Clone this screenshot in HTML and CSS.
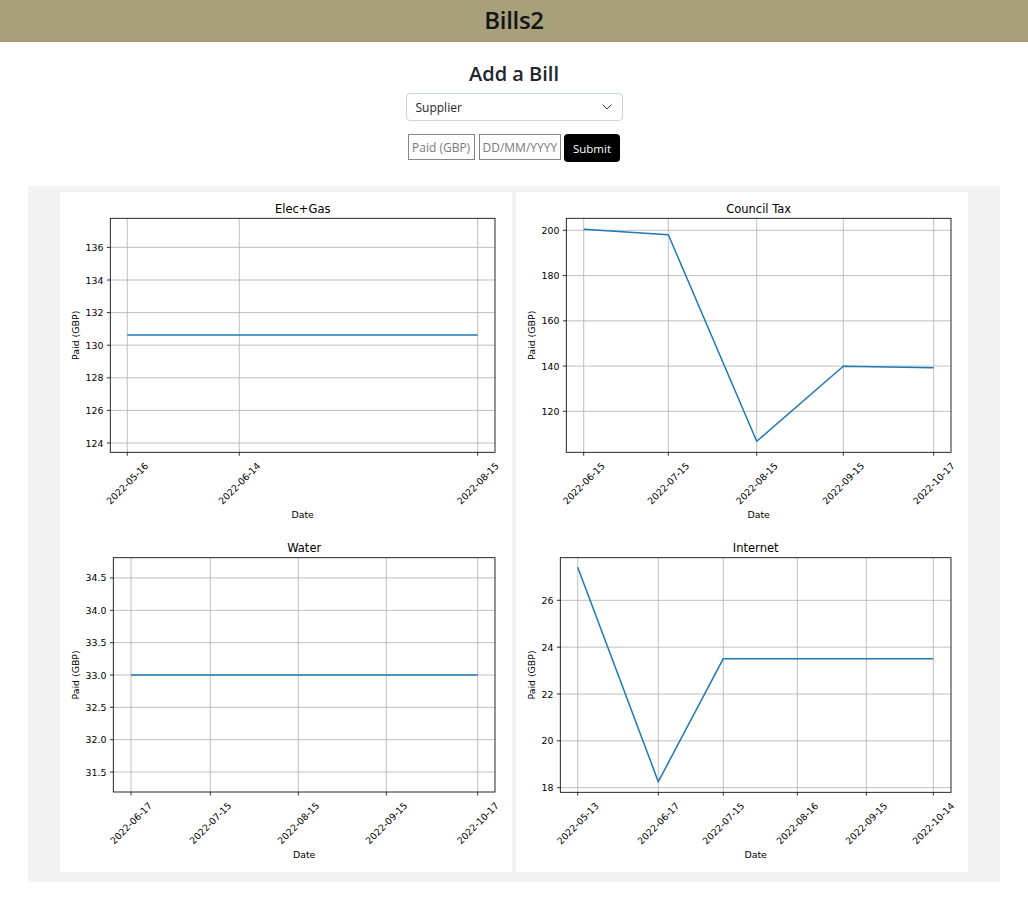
FILE: index.html
```html
<!DOCTYPE html>
<html lang="en">
<head>
<meta charset="utf-8">
<title>Bills2</title>
<link rel="stylesheet" href="styles.css">
</head>
<body>
<header class="topbar"><h1>Bills2</h1></header>
<main>
  <section class="add-bill">
    <h2>Add a Bill</h2>
    <form class="bill-form">
      <label class="select-wrap">
        <select class="supplier">
          <option>Supplier</option>
          <option>Elec+Gas</option>
          <option>Council Tax</option>
          <option>Water</option>
          <option>Internet</option>
        </select>
        <svg class="chevron" width="10" height="6" viewBox="0 0 10 6"><path d="M0.6 0.6L5 5L9.4 0.6" fill="none" stroke="#343a40" stroke-width="1"/></svg>
      </label>
      <div class="form-row">
        <input class="paid" type="text" placeholder="Paid (GBP)">
        <input class="date" type="text" placeholder="DD/MM/YYYY">
        <button class="submit" type="button">Submit</button>
      </div>
    </form>
  </section>

  <section class="charts">
    <!-- Elec+Gas -->
    <svg class="plot" width="452" height="340" viewBox="0 0 452 340">
      <text class="title" x="242.7" y="20.7">Elec+Gas</text>
      <path class="grid" d="M50.3 251H435M50.3 218.4H435M50.3 185.8H435M50.3 153.2H435M50.3 120.6H435M50.3 88H435M50.3 55.4H435M67.3 26.3V260.3M179.3 26.3V260.3M417.7 26.3V260.3"/>
      <path class="series" d="M67.3 143H417.7"/>
      <rect class="frame" x="50.3" y="26.3" width="384.7" height="234"/>
      <path class="tick" d="M46.9 251H50.3M46.9 218.4H50.3M46.9 185.8H50.3M46.9 153.2H50.3M46.9 120.6H50.3M46.9 88H50.3M46.9 55.4H50.3M67.3 260.3V263.7M179.3 260.3V263.7M417.7 260.3V263.7"/>
      <g class="ytl">
        <text x="43.4" y="251">124</text>
        <text x="43.4" y="218.4">126</text>
        <text x="43.4" y="185.8">128</text>
        <text x="43.4" y="153.2">130</text>
        <text x="43.4" y="120.6">132</text>
        <text x="43.4" y="88">134</text>
        <text x="43.4" y="55.4">136</text>
      </g>
      <g class="xtl">
        <text transform="translate(67.3 291.3) rotate(-45)">2022-05-16</text>
        <text transform="translate(179.3 291.3) rotate(-45)">2022-06-14</text>
        <text transform="translate(417.7 291.3) rotate(-45)">2022-08-15</text>
      </g>
      <text class="xlab" x="242.7" y="325.8">Date</text>
      <text class="ylab" transform="translate(15.5 143.3) rotate(-90)">Paid (GBP)</text>
    </svg>

    <!-- Council Tax -->
    <svg class="plot" width="452" height="340" viewBox="0 0 452 340">
      <text class="title" x="242.7" y="20.7">Council Tax</text>
      <path class="grid" d="M50.3 219.3H435M50.3 174.05H435M50.3 128.8H435M50.3 83.55H435M50.3 38.3H435M67.7 26.3V260.3M152.3 26.3V260.3M240.7 26.3V260.3M327.3 26.3V260.3M417.7 26.3V260.3"/>
      <path class="series" d="M67.7 37.3L152.3 42.7L240.7 249.3L327.3 174.3L417.7 175.7"/>
      <rect class="frame" x="50.3" y="26.3" width="384.7" height="234"/>
      <path class="tick" d="M46.9 219.3H50.3M46.9 174.05H50.3M46.9 128.8H50.3M46.9 83.55H50.3M46.9 38.3H50.3M67.7 260.3V263.7M152.3 260.3V263.7M240.7 260.3V263.7M327.3 260.3V263.7M417.7 260.3V263.7"/>
      <g class="ytl">
        <text x="43.4" y="219.3">120</text>
        <text x="43.4" y="174.05">140</text>
        <text x="43.4" y="128.8">160</text>
        <text x="43.4" y="83.55">180</text>
        <text x="43.4" y="38.3">200</text>
      </g>
      <g class="xtl">
        <text transform="translate(67.7 291.3) rotate(-45)">2022-06-15</text>
        <text transform="translate(152.3 291.3) rotate(-45)">2022-07-15</text>
        <text transform="translate(240.7 291.3) rotate(-45)">2022-08-15</text>
        <text transform="translate(327.3 291.3) rotate(-45)">2022-09-15</text>
        <text transform="translate(417.7 291.3) rotate(-45)">2022-10-17</text>
      </g>
      <text class="xlab" x="242.7" y="325.8">Date</text>
      <text class="ylab" transform="translate(15.2 143.3) rotate(-90)">Paid (GBP)</text>
    </svg>

    <!-- Water -->
    <svg class="plot" width="452" height="340" viewBox="0 0 452 340">
      <text class="title" x="244.2" y="19.7">Water</text>
      <path class="grid" d="M53.3 240.05H435M53.3 207.7H435M53.3 175.35H435M53.3 143H435M53.3 110.65H435M53.3 78.3H435M53.3 45.95H435M71 25.7V260M150.3 25.7V260M238.3 25.7V260M326.3 25.7V260M417.7 25.7V260"/>
      <path class="series" d="M71 143H417.7"/>
      <rect class="frame" x="53.3" y="25.7" width="381.7" height="234.3"/>
      <path class="tick" d="M49.9 240.05H53.3M49.9 207.7H53.3M49.9 175.35H53.3M49.9 143H53.3M49.9 110.65H53.3M49.9 78.3H53.3M49.9 45.95H53.3M71 260V263.4M150.3 260V263.4M238.3 260V263.4M326.3 260V263.4M417.7 260V263.4"/>
      <g class="ytl">
        <text x="46.4" y="240.05">31.5</text>
        <text x="46.4" y="207.7">32.0</text>
        <text x="46.4" y="175.35">32.5</text>
        <text x="46.4" y="143">33.0</text>
        <text x="46.4" y="110.65">33.5</text>
        <text x="46.4" y="78.3">34.0</text>
        <text x="46.4" y="45.95">34.5</text>
      </g>
      <g class="xtl">
        <text transform="translate(71 291) rotate(-45)">2022-06-17</text>
        <text transform="translate(150.3 291) rotate(-45)">2022-07-15</text>
        <text transform="translate(238.3 291) rotate(-45)">2022-08-15</text>
        <text transform="translate(326.3 291) rotate(-45)">2022-09-15</text>
        <text transform="translate(417.7 291) rotate(-45)">2022-10-17</text>
      </g>
      <text class="xlab" x="244.2" y="325.5">Date</text>
      <text class="ylab" transform="translate(15.5 142.9) rotate(-90)">Paid (GBP)</text>
    </svg>

    <!-- Internet -->
    <svg class="plot" width="452" height="340" viewBox="0 0 452 340">
      <text class="title" x="239.7" y="19.7">Internet</text>
      <path class="grid" d="M44.3 255.7H435M44.3 208.85H435M44.3 162H435M44.3 115.15H435M44.3 68.3H435M61.7 25.7V260.3M142.3 25.7V260.3M207.3 25.7V260.3M281.3 25.7V260.3M350.3 25.7V260.3M417.3 25.7V260.3"/>
      <path class="series" d="M61.7 35.3L142.3 249.7L207.3 126.7H417.3"/>
      <rect class="frame" x="44.3" y="25.7" width="390.7" height="234.6"/>
      <path class="tick" d="M40.9 255.7H44.3M40.9 208.85H44.3M40.9 162H44.3M40.9 115.15H44.3M40.9 68.3H44.3M61.7 260.3V263.7M142.3 260.3V263.7M207.3 260.3V263.7M281.3 260.3V263.7M350.3 260.3V263.7M417.3 260.3V263.7"/>
      <g class="ytl">
        <text x="37.4" y="255.7">18</text>
        <text x="37.4" y="208.85">20</text>
        <text x="37.4" y="162">22</text>
        <text x="37.4" y="115.15">24</text>
        <text x="37.4" y="68.3">26</text>
      </g>
      <g class="xtl">
        <text transform="translate(61.7 291.3) rotate(-45)">2022-05-13</text>
        <text transform="translate(142.3 291.3) rotate(-45)">2022-06-17</text>
        <text transform="translate(207.3 291.3) rotate(-45)">2022-07-15</text>
        <text transform="translate(281.3 291.3) rotate(-45)">2022-08-16</text>
        <text transform="translate(350.3 291.3) rotate(-45)">2022-09-15</text>
        <text transform="translate(417.3 291.3) rotate(-45)">2022-10-14</text>
      </g>
      <text class="xlab" x="239.7" y="325.8">Date</text>
      <text class="ylab" transform="translate(15.2 143) rotate(-90)">Paid (GBP)</text>
    </svg>
  </section>
</main>
</body>
</html>
```

FILE: styles.css
```css
* {
  box-sizing: border-box;
}

body {
  margin: 0;
  background: #ffffff;
  color: #212529;
  font-family: "Open Sans", "Noto Sans", sans-serif;
}

.topbar {
  background: #a89f7b;
  height: 42px;
  display: flex;
  justify-content: center;
  align-items: flex-start;
}

.topbar h1 {
  margin: 0;
  padding-top: 3px;
  font-size: 24px;
  line-height: 34px;
  font-weight: 600;
  color: #141414;
  letter-spacing: -0.3px;
}

.add-bill {
  display: flex;
  flex-direction: column;
  align-items: center;
  padding-top: 18px;
}

.add-bill h2 {
  margin: 0;
  font-size: 20px;
  line-height: 28px;
  font-weight: 600;
  color: #212529;
}

.bill-form {
  display: flex;
  flex-direction: column;
  align-items: center;
  margin-top: 5px;
}

.select-wrap {
  position: relative;
  display: block;
  width: 217px;
  height: 28px;
}

.supplier {
  appearance: none;
  -webkit-appearance: none;
  width: 100%;
  height: 100%;
  padding: 0 30px 0 9px;
  border: 1px solid #ced4da;
  border-radius: 4px;
  background: #fff;
  color: #212529;
  font-family: "Open Sans", "Noto Sans", sans-serif;
  font-size: 12px;
}

.chevron {
  position: absolute;
  right: 11px;
  top: 11px;
  pointer-events: none;
}

.form-row {
  display: flex;
  align-items: flex-start;
  gap: 3.5px;
  margin-top: 13px;
}

.form-row input {
  height: 26px;
  padding: 0 3px;
  border: 1px solid #858585;
  border-radius: 0;
  background: #fff;
  font-family: "Open Sans", "Noto Sans", sans-serif;
  font-size: 12px;
  color: #212529;
}

.form-row input::placeholder {
  color: #7a7a7a;
}

.paid {
  width: 67px;
}

.date {
  width: 82px;
}

.submit {
  width: 56px;
  height: 28px;
  padding: 0;
  border: none;
  border-radius: 4px;
  background: #000;
  color: #fff;
  font-family: "Open Sans", "Noto Sans", sans-serif;
  font-size: 11.5px;
}

.charts {
  margin: 24px 28px 0;
  padding: 6px 0 10px;
  background: #f3f3f3;
  display: grid;
  grid-template-columns: 452px 453px;
  column-gap: 4px;
  justify-content: center;
}

.plot {
  display: block;
  background: #ffffff;
  font-family: "DejaVu Sans", sans-serif;
}

.plot text {
  fill: #000;
  font-size: 9.4px;
}

.plot .title {
  font-size: 11.5px;
  text-anchor: middle;
}

.plot .grid {
  fill: none;
  stroke: #b0b0b0;
  stroke-width: 0.8;
}

.plot .series {
  fill: none;
  stroke: #1f77b4;
  stroke-width: 1.5;
  stroke-linejoin: round;
}

.plot .frame {
  fill: none;
  stroke: #000;
  stroke-width: 0.85;
}

.plot .tick {
  fill: none;
  stroke: #000;
  stroke-width: 0.8;
}

.plot .ytl text {
  text-anchor: end;
  dominant-baseline: central;
}

.plot .xtl text {
  text-anchor: middle;
  dominant-baseline: central;
}

.plot .xlab {
  text-anchor: middle;
}

.plot .ylab {
  text-anchor: middle;
  dominant-baseline: central;
}
```
